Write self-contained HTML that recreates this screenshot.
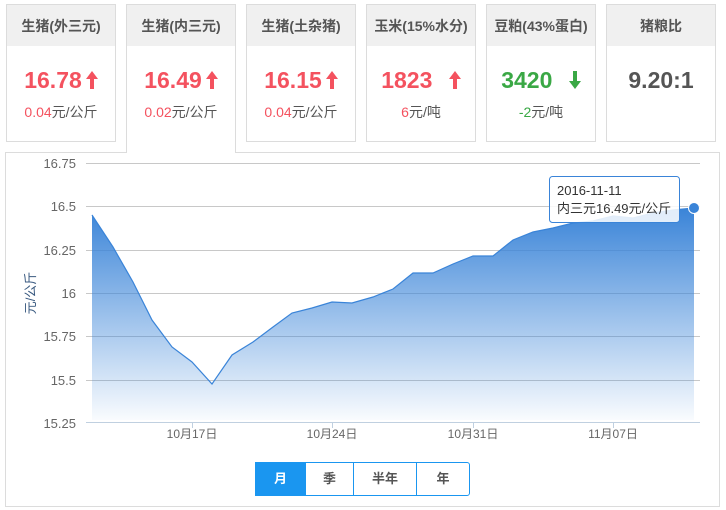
<!DOCTYPE html>
<html><head><meta charset="utf-8"><style>
*{margin:0;padding:0;box-sizing:border-box}
body{width:726px;height:510px;background:#fff;font-family:"Liberation Sans","Noto Sans CJK SC",sans-serif;position:relative;overflow:hidden}
.card{position:absolute;top:4px;width:110px;height:138px;border:1px solid #dcdcdc;background:#fff}
.card .h{height:41px;background:#f0f0f0;text-align:center;line-height:42px;font-size:14px;font-weight:bold;color:#555}
.card .v{position:absolute;top:60px;left:0;right:0;text-align:center;font-size:23px;font-weight:bold;line-height:30px}
.card .s{position:absolute;top:97px;left:0;right:0;text-align:center;font-size:14px;color:#555}
.r{color:#f4525f}.g{color:#3aa845}
.act{height:149px;border-bottom:none;z-index:2}
.panel{position:absolute;left:5px;top:152px;width:715px;height:355px;border:1px solid #dcdcdc}
.btns{position:absolute;left:255px;top:462px;height:34px;display:flex;border:1px solid #1a96f0;border-radius:0 3px 3px 0}
.btns div{height:32px;line-height:32px;text-align:center;font-size:13px;font-weight:bold;color:#555;border-left:1px solid #1a96f0}
.btns div:first-child{border-left:none;background:#1a96f0;color:#fff}
.ar{display:inline-block;vertical-align:-1px;margin-left:4px}
</style></head><body>
<div class="card" style="left:6px"><div class="h">生猪(外三元)</div><div class="v r">16.78<svg class="ar" width="12" height="18" viewBox="0 0 12 18"><path d="M6,0 L12,8 L8,8 L8,18 L4,18 L4,8 L0,8Z" fill="#f4525f"/></svg></div><div class="s"><span class="r">0.04</span>元/公斤</div></div>
<div class="card act" style="left:126px"><div class="h">生猪(内三元)</div><div class="v r">16.49<svg class="ar" width="12" height="18" viewBox="0 0 12 18"><path d="M6,0 L12,8 L8,8 L8,18 L4,18 L4,8 L0,8Z" fill="#f4525f"/></svg></div><div class="s"><span class="r">0.02</span>元/公斤</div></div>
<div class="card" style="left:246px"><div class="h">生猪(土杂猪)</div><div class="v r">16.15<svg class="ar" width="12" height="18" viewBox="0 0 12 18"><path d="M6,0 L12,8 L8,8 L8,18 L4,18 L4,8 L0,8Z" fill="#f4525f"/></svg></div><div class="s"><span class="r">0.04</span>元/公斤</div></div>
<div class="card" style="left:366px"><div class="h">玉米(15%水分)</div><div class="v r">1823 <svg class="ar" style="margin-left:10px" width="12" height="18" viewBox="0 0 12 18"><path d="M6,0 L12,8 L8,8 L8,18 L4,18 L4,8 L0,8Z" fill="#f4525f"/></svg></div><div class="s"><span class="r">6</span>元/吨</div></div>
<div class="card" style="left:486px"><div class="h">豆粕(43%蛋白)</div><div class="v g">3420 <svg class="ar" style="margin-left:10px" width="12" height="18" viewBox="0 0 12 18"><path d="M6,18 L12,10 L8,10 L8,0 L4,0 L4,10 L0,10Z" fill="#3aa845"/></svg></div><div class="s"><span class="g">-2</span>元/吨</div></div>
<div class="card" style="left:606px"><div class="h">猪粮比</div><div class="v" style="color:#555">9.20:1</div></div>
<div class="panel"></div>
<svg style="position:absolute;left:0;top:0" width="726" height="510">
<defs><linearGradient id="gr" x1="0" y1="0" x2="0" y2="1"><stop offset="0" stop-color="#3a84d8"/><stop offset="1" stop-color="#3a84d8" stop-opacity="0.03"/></linearGradient></defs>
<g stroke="#c8c8c8" stroke-width="1">
<line x1="86" y1="163.5" x2="700" y2="163.5"/><line x1="86" y1="206.5" x2="700" y2="206.5"/><line x1="86" y1="250.5" x2="700" y2="250.5"/><line x1="86" y1="293.5" x2="700" y2="293.5"/><line x1="86" y1="336.5" x2="700" y2="336.5"/><line x1="86" y1="380.5" x2="700" y2="380.5"/>
</g>
<line x1="86" y1="422.5" x2="700" y2="422.5" stroke="#c0d0e0"/>
<g stroke="#c0d0e0"><line x1="192.5" y1="422" x2="192.5" y2="428"/><line x1="332.5" y1="422" x2="332.5" y2="428"/><line x1="473.5" y1="422" x2="473.5" y2="428"/><line x1="613.5" y1="422" x2="613.5" y2="428"/></g>
<path d="M92,215 L113,247 133,282 152,320 172,347 192,362 212,384 232,355 253,342 273,327 292,313 312,308 332,302 352,303 373,297 393,289 413,273 433,273 453,264 473,256 493,256 513,240 533,232 553,228 573,223 593,221 613,216 633,218 653,213 673,210 694,208 L694,420 L92,420 Z" fill="url(#gr)"/>
<path d="M92,215 L113,247 133,282 152,320 172,347 192,362 212,384 232,355 253,342 273,327 292,313 312,308 332,302 352,303 373,297 393,289 413,273 433,273 453,264 473,256 493,256 513,240 533,232 553,228 573,223 593,221 613,216 633,218 653,213 673,210 694,208" fill="none" stroke="#3a84d8" stroke-width="1.2"/>
<circle cx="694" cy="208" r="5.5" fill="#3a84d8" stroke="#fff" stroke-width="1"/>
<g font-size="13" fill="#666" text-anchor="end" font-family="Liberation Sans,sans-serif">
<text x="76" y="168">16.75</text><text x="76" y="211">16.5</text><text x="76" y="255">16.25</text><text x="76" y="298">16</text><text x="76" y="341">15.75</text><text x="76" y="385">15.5</text><text x="76" y="428">15.25</text></g>
<g font-size="12" fill="#666" text-anchor="middle" font-family="Liberation Sans,Noto Sans CJK SC,sans-serif">
<text x="192" y="438">10月17日</text><text x="332" y="438">10月24日</text><text x="473" y="438">10月31日</text><text x="613" y="438">11月07日</text></g>
<text transform="translate(35,293) rotate(-90)" font-size="13" fill="#3a5a80" text-anchor="middle" font-family="Liberation Sans,Noto Sans CJK SC,sans-serif">元/公斤</text>
<rect x="549.5" y="176.5" width="130" height="46" rx="3" fill="#fff" fill-opacity="0.85" stroke="#3a84d8"/>
<g font-size="13" fill="#333" font-family="Liberation Sans,Noto Sans CJK SC,sans-serif"><text x="557" y="195">2016-11-11</text><text x="557" y="213">内三元16.49元/公斤</text></g>
</svg>
<div class="btns"><div style="width:49px">月</div><div style="width:48px">季</div><div style="width:63px">半年</div><div style="width:53px">年</div></div>
</body></html>
